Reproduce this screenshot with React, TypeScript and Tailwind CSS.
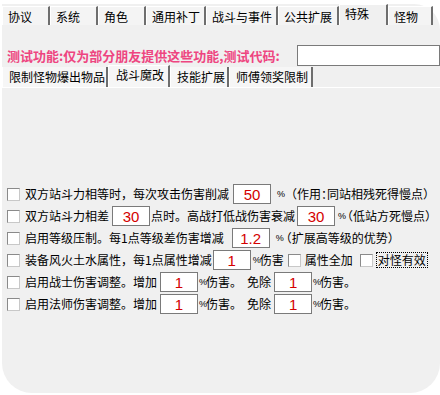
import React from "react";

const font = { fontFamily: '"Noto Sans CJK SC", "Noto Sans", sans-serif' };

const mainTabs = [
  { label: "协议", w: "w-[48px]" },
  { label: "系统", w: "w-[48px]" },
  { label: "角色", w: "w-[48px]" },
  { label: "通用补丁", w: "w-[60px]" },
  { label: "战斗与事件", w: "w-[72px]" },
  { label: "公共扩展", w: "w-[61px]" },
  { label: "特殊", w: "w-[49px]", active: true },
  { label: "怪物", w: "w-[45px]" },
];

const subTabs = [
  { label: "限制怪物爆出物品", w: "w-[106px]" },
  { label: "战斗魔改", w: "w-[62px]", active: true },
  { label: "技能扩展", w: "w-[59px]" },
  { label: "师傅领奖限制", w: "w-[84px]" },
];

function CheckBox({ className = "" }: { className?: string }) {
  return (
    <span
      className={`inline-block w-[13px] h-[13px] shrink-0 bg-white border border-t-[#8a8a8a] border-l-[#8a8a8a] border-r-[#c8c8c8] border-b-[#c8c8c8] ${className}`}
    />
  );
}

function NumBox({ value, className = "" }: { value: string; className?: string }) {
  return (
    <span
      className={`inline-flex items-center justify-center w-[38px] h-[20px] shrink-0 bg-white border border-[#7a7a7a] text-[15px] leading-none text-[#d40000] ${className}`}
      style={{ fontFamily: '"Liberation Sans", Arial, sans-serif' }}
    >
      {value}
    </span>
  );
}

// the percent sign is a narrow glyph in the original
function Pct() {
  return (
    <span
      className="inline-block w-[7px] text-[9px] leading-none text-center"
      style={{ fontFamily: '"Liberation Sans", Arial, sans-serif' }}
    >
      %
    </span>
  );
}

// half-width CJK punctuation (brackets, colon)
function Half({ children, className = "" }: { children: React.ReactNode; className?: string }) {
  return <span className={`[font-feature-settings:'halt'] ${className}`}>{children}</span>;
}

function Row({ children }: { children: React.ReactNode }) {
  return <div className="flex items-center h-[22px] pl-[5px] whitespace-nowrap">{children}</div>;
}

export default function App() {
  return (
    <div className="w-[440px] h-[395px] bg-white pt-[4px] pl-[2px] text-[12px] text-black" style={font}>
      <div className="h-[389px] bg-[#f0f0f0] rounded-tr-[26px] rounded-b-[30px] flex flex-col">
        {/* main tabs */}
        <div className="flex items-end h-[21px]">
          {mainTabs.map((t) => (
            <div
              key={t.label}
              className={`${t.w} flex items-center pl-[5px] border-l border-l-white border-r-2 border-r-[#6e6e6e] ${
                t.active ? "h-[21px] pb-[3px] bg-[#f0f0f0] border-t border-t-white" : "h-[19px] pt-[1px] bg-[#f4f4f4] border-t border-t-white"
              }`}
            >
              <span className="leading-none">{t.label}</span>
            </div>
          ))}
          <div className="flex-1 h-[19px]" />
        </div>

        {/* test code line */}
        <div className="flex items-center h-[21px] mt-[20px] pl-[5px]">
          <span className="text-[13px] font-bold text-[#ee4580] leading-none whitespace-nowrap">
            测试功能:仅为部分朋友提供这些功能,测试代码:
          </span>
          <div className="ml-auto w-[143px] h-[21px] bg-white border border-[#7a7a7a]" />
        </div>

        {/* sub tabs */}
        <div className="flex items-end h-[22px] border-b border-b-white">
          {subTabs.map((t) => (
            <div
              key={t.label}
              className={`${t.w} flex items-center pl-[6px] border-l border-l-white border-r-2 border-r-[#6e6e6e] ${
                t.active ? "h-[22px] pb-[3px] pl-[7px] bg-[#f6f6f6] border-t border-t-white" : "h-[20px] bg-[#f6f6f6]"
              }`}
            >
              <span className="leading-none whitespace-nowrap">{t.label}</span>
            </div>
          ))}
        </div>

        {/* settings */}
        <div className="flex flex-col pt-[95px]">
          <Row>
            <CheckBox />
            <span className="ml-[5px]">双方站斗力相等时，每次攻击伤害削减</span>
            <NumBox value="50" className="ml-[4px]" />
            <span className="ml-[6px] flex items-center">
              <Pct />
              <Half className="ml-[7px]">（</Half>作用<Half>：</Half>同站相残死得慢点<Half>）</Half>
            </span>
          </Row>
          <Row>
            <CheckBox />
            <span className="ml-[5px]">双方站斗力相差</span>
            <NumBox value="30" className="ml-[3px]" />
            <span className="ml-[1px]">点时。高战打低战伤害衰减</span>
            <NumBox value="30" className="ml-[2px]" />
            <span className="ml-[3px] flex items-center">
              <Pct />
              <Half className="ml-[2px]">（</Half>低站方死慢点<Half>）</Half>
            </span>
          </Row>
          <Row>
            <CheckBox />
            <span className="ml-[5px]">启用等级压制。每1点等级差伤害增减</span>
            <NumBox value="1.2" className="ml-[8px]" />
            <span className="ml-[6px] flex items-center">
              <Pct />
              <Half className="ml-[3px]">（</Half>扩展高等级的优势<Half>）</Half>
            </span>
          </Row>
          <Row>
            <CheckBox />
            <span className="ml-[5px]">装备风火土水属性，每1点属性增减</span>
            <NumBox value="1" className="ml-[1px]" />
            <span className="ml-[2px] flex items-center">
              <Pct />
              伤害
            </span>
            <CheckBox className="ml-[4px]" />
            <span className="ml-[4px]">属性全加</span>
            <CheckBox className="ml-[7px]" />
            <span className="ml-[3px] px-[1px] border border-dotted border-black leading-[14px]">对怪有效</span>
          </Row>
          <Row>
            <CheckBox />
            <span className="ml-[5px]">启用战士伤害调整。增加</span>
            <NumBox value="1" className="ml-[3px]" />
            <span className="ml-[1px] flex items-center">
              <Pct />
              伤害。
            </span>
            <span className="ml-[5px]">免除</span>
            <NumBox value="1" className="ml-[3px]" />
            <span className="ml-[1px] flex items-center">
              <Pct />
              伤害。
            </span>
          </Row>
          <Row>
            <CheckBox />
            <span className="ml-[5px]">启用法师伤害调整。增加</span>
            <NumBox value="1" className="ml-[3px]" />
            <span className="ml-[1px] flex items-center">
              <Pct />
              伤害。
            </span>
            <span className="ml-[5px]">免除</span>
            <NumBox value="1" className="ml-[3px]" />
            <span className="ml-[1px] flex items-center">
              <Pct />
              伤害。
            </span>
          </Row>
        </div>
      </div>
    </div>
  );
}
